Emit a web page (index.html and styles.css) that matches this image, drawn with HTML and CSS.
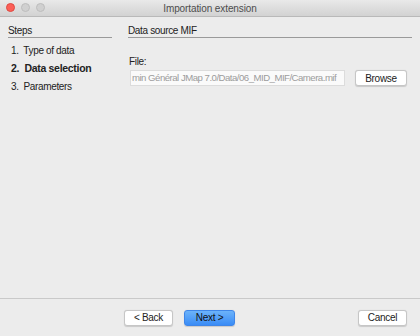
FILE: index.html
```html
<!DOCTYPE html>
<html lang="en">
<head>
  <meta charset="UTF-8">
  <title>Importation extension</title>
  <link rel="stylesheet" href="styles.css">
</head>
<body>
  <div class="window">
    <div class="title-bar">
      <div class="lights">
        <span class="light close"></span>
        <span class="light"></span>
        <span class="light"></span>
      </div>
      <div class="title">Importation extension</div>
    </div>

    <div class="main">
      <div class="steps">
        <div class="section-head">Steps</div>
        <ol class="step-list">
          <li>1.&nbsp; Type of data</li>
          <li class="current">2.&nbsp; Data selection</li>
          <li>3.&nbsp; Parameters</li>
        </ol>
      </div>

      <div class="panel">
        <div class="section-head">Data source MIF</div>
        <div class="field-label">File:</div>
        <div class="file-row">
          <div class="file-input"><span>min Général JMap 7.0/Data/06_MID_MIF/Camera.mif</span></div>
          <button class="btn browse">Browse</button>
        </div>
      </div>
    </div>

    <div class="footer">
      <button class="btn">&lt; Back</button>
      <button class="btn primary">Next &gt;</button>
      <span class="spacer"></span>
      <button class="btn">Cancel</button>
    </div>
  </div>
</body>
</html>
```

FILE: styles.css
```css
body {
  margin: 0;
  padding: 0;
  background: #ececec;
  font-family: "Liberation Sans", Arial, sans-serif;
  font-size: 10px;
  letter-spacing: -0.35px;
  color: #222;
}

.window {
  width: 420px;
  height: 336px;
  display: flex;
  flex-direction: column;
  background: #ececec;
}

.title-bar {
  height: 16px;
  background: linear-gradient(#e9e9e9, #d2d2d2);
  border-bottom: 1px solid #b9b9b9;
  position: relative;
  display: flex;
  align-items: center;
  justify-content: center;
}

.lights {
  position: absolute;
  left: 6px;
  top: 3px;
  display: flex;
  gap: 6px;
}

.light {
  width: 9px;
  height: 9px;
  border-radius: 50%;
  background: #d0d0d0;
  border: 0.5px solid #bdbdbd;
  box-sizing: border-box;
}

.light.close {
  background: #fc5f57;
  border-color: #de4a42;
}

.title {
  color: #4d4d4d;
  font-size: 10px;
  letter-spacing: -0.1px;
}

.main {
  flex: 1;
  display: flex;
  gap: 16px;
  padding: 7px 8px 0 8px;
}

.steps {
  width: 104px;
}

.panel {
  flex: 1;
}

.section-head {
  height: 13px;
  line-height: 13px;
  border-bottom: 1px solid #9a9a9a;
  color: #222;
}

.step-list {
  list-style: none;
  margin: 6px 0 0 0;
  padding: 0 0 0 3px;
}

.step-list li {
  height: 18px;
  line-height: 13px;
}

.step-list li.current {
  font-weight: bold;
  font-size: 10.5px;
  letter-spacing: -0.3px;
}

.field-label {
  margin-top: 18px;
  padding-left: 1px;
  line-height: 12px;
}

.file-row {
  display: flex;
  align-items: center;
  gap: 10px;
  margin-top: 1px;
}

.file-input {
  width: 215px;
  height: 16px;
  margin-left: 2px;
  box-sizing: border-box;
  background: #fafafa;
  border: 1px solid #dcdcdc;
  display: flex;
  align-items: center;
  overflow: hidden;
  white-space: nowrap;
  color: #9c9c9c;
  font-size: 9.6px;
  letter-spacing: -0.5px;
  padding-left: 1px;
}

.btn {
  font-family: "Liberation Sans", Arial, sans-serif;
  font-size: 10px;
  letter-spacing: -0.3px;
  color: #222;
  height: 16px;
  padding: 0;
  background: #fff;
  border: 1px solid #c6c6c6;
  border-radius: 3px;
  box-shadow: 0 0.5px 1px rgba(0, 0, 0, 0.15);
  width: 49px;
}

.browse {
  width: 52px;
  margin-top: 1px;
}

.footer {
  height: 37px;
  border-top: 1px solid #c9c9c9;
  display: flex;
  align-items: center;
  padding: 0 13px 0 124px;
  gap: 11px;
}

.btn.primary {
  width: 51px;
  color: #111;
  background: linear-gradient(#6cb3fa, #3a8cf6);
  border-color: #3f86e8;
}

.spacer {
  flex: 1;
}
```
